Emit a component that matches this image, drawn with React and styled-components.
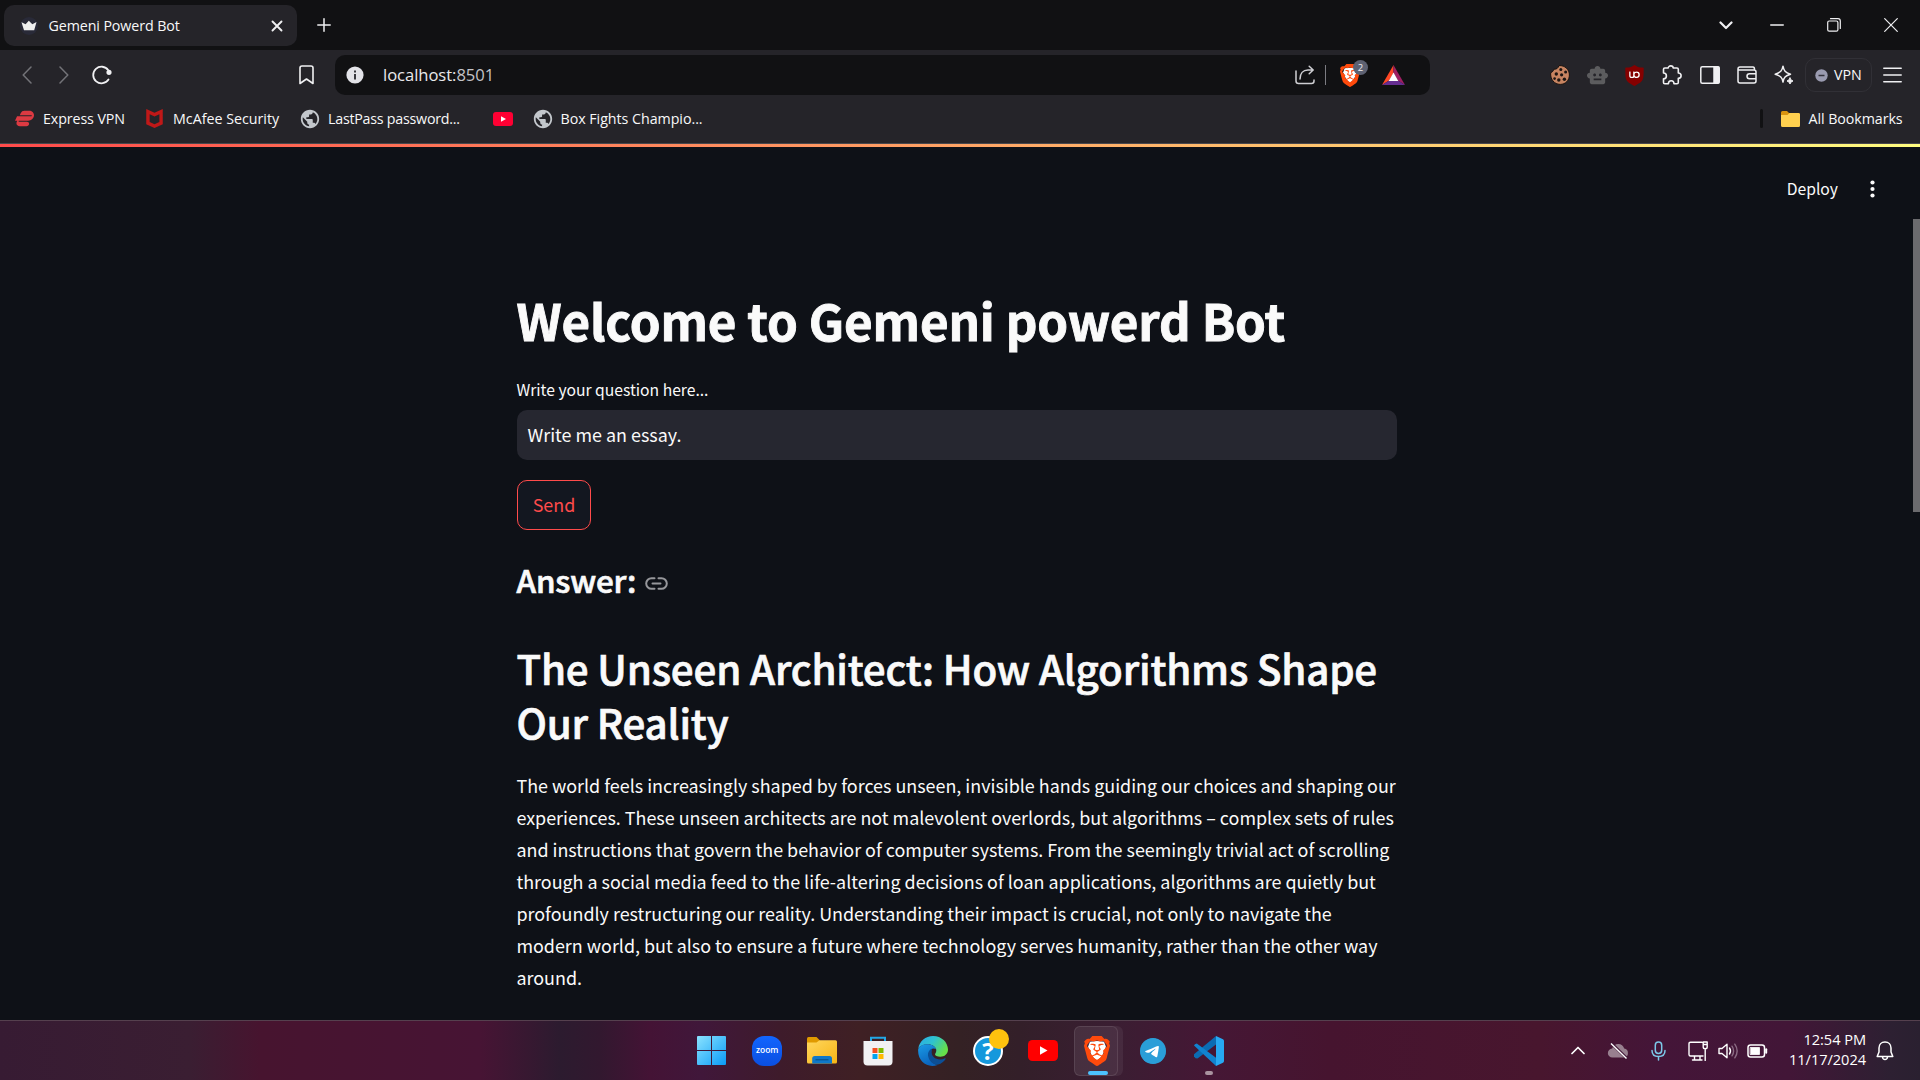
import React from "react";
import styled, { createGlobalStyle } from "styled-components";
import { SiBrave, SiExpressvpn, SiMcafee, SiUblockorigin } from "react-icons/si";
import { FaTelegram } from "react-icons/fa6";
import { MdSmartToy, MdPublic } from "react-icons/md";

const uiFont = '"Open Sans", "Noto Sans", sans-serif';
const pageFont = '"Noto Sans CJK SC", "Noto Sans", sans-serif';

const GlobalStyle = createGlobalStyle`
  *, *::before, *::after { box-sizing: border-box; }
  body { margin: 0; background: #0e1117; overflow: hidden; }
  h1, h2, h3, p { margin: 0; }
  button { padding: 0; border: 0; background: none; font: inherit; color: inherit; }
  svg { display: block; flex: none; }
`;

const Screen = styled.div`
  display: flex;
  flex-direction: column;
  width: 1920px;
  height: 1080px;
  overflow: hidden;
  color: #f8f8f9;
  font-family: ${uiFont};
  font-size: 14.25px;
  white-space: nowrap;
`;

/* ---------- browser chrome ---------- */

const TabStrip = styled.header`
  display: flex;
  align-items: center;
  height: 50px;
  flex: none;
  padding: 0 0 0 4px;
  background: #111113;
`;

const Tab = styled.div`
  display: flex;
  align-items: center;
  width: 293px;
  height: 41px;
  margin-top: 1px;
  padding: 0 14px 0 16px;
  border-radius: 10px;
  background: #252429;
`;

const Label = styled.span`
  letter-spacing: ${(p) => p.$tracking || 0}px;
  line-height: 20px;
`;

const TabTitle = styled(Label)`
  flex: 1;
  margin-left: 10.5px;
`;

const NewTab = styled.button`
  display: flex;
  margin-left: 19.5px;
`;

const WindowButtons = styled.div`
  display: flex;
  margin-left: auto;
  padding-right: 1px;
`;

const WindowButton = styled.button`
  display: flex;
  align-items: center;
  justify-content: center;
  width: ${(p) => p.$w || 57}px;
  height: 50px;
`;

const Toolbar = styled.div`
  display: flex;
  align-items: center;
  height: 50px;
  flex: none;
  padding-right: 18px;
  background: #252429;
`;

const NavButtons = styled.div`
  display: flex;
  align-items: center;
  width: 335px;
  padding-left: 8px;
`;

const NavButton = styled.button`
  display: flex;
  justify-content: center;
  width: 37.5px;
  margin-left: ${(p) => (p.$push ? "auto" : 0)};
  margin-right: ${(p) => (p.$push ? "10px" : 0)};
`;

const AddressBar = styled.div`
  display: flex;
  align-items: center;
  width: 1095px;
  height: 40px;
  padding: 0 25px 0 11px;
  border-radius: 10px;
  background: #111113;
`;

const Address = styled.span`
  flex: 1;
  margin-left: 19px;
  font-size: 16.6px;
  line-height: 22px;
  letter-spacing: -0.05px;
  color: #e9e9ec;
  i { font-style: normal; color: #c3c3c8; }
`;

const AddressDivider = styled.span`
  width: 1.5px;
  height: 20px;
  margin: 0 14px 0 10px;
  background: #7c7c82;
`;

const ShieldButton = styled.button`
  position: relative;
  display: flex;
  width: 20px;
  margin-right: 22px;
`;

const CountBadge = styled.span`
  position: absolute;
  left: 13px;
  top: -4px;
  width: 15px;
  height: 15px;
  border-radius: 50%;
  background: #5d6172;
  color: #f0f0f4;
  font-size: 9.5px;
  line-height: 15px;
  text-align: center;
`;

const Extensions = styled.div`
  display: flex;
  align-items: center;
  margin-left: auto;
`;

const ExtensionSlot = styled.button`
  display: flex;
  align-items: center;
  justify-content: center;
  width: 37.35px;
  height: 40px;
`;

const VpnButton = styled.button`
  display: flex;
  align-items: center;
  gap: 6px;
  width: 67px;
  height: 34px;
  margin: 0 11px 0 2px;
  padding-left: 9px;
  border: 1px solid #313036;
  border-radius: 10px;
  font-size: 14.25px;
`;

const BookmarksBar = styled.nav`
  display: flex;
  align-items: center;
  height: 44px;
  flex: none;
  padding: 0 17.5px 6px 15px;
  border-bottom: 1px solid #47474d;
  background: #252429;
`;

const Bookmark = styled.a`
  display: flex;
  align-items: center;
  gap: 9px;
  width: ${(p) => p.$w}px;
`;

const AllBookmarks = styled.a`
  display: flex;
  align-items: center;
  gap: 9px;
  margin-left: auto;
  &::before {
    content: "";
    width: 3px;
    height: 19px;
    margin-right: 9px;
    border-radius: 2px;
    background: #111113;
  }
`;

/* ---------- page ---------- */

const Decoration = styled.div`
  height: 3px;
  flex: none;
  background: linear-gradient(90deg, #ff4b4b, #fffd80);
`;

const Page = styled.main`
  display: flex;
  height: 873px;
  flex: none;
  flex-direction: column;
  overflow: hidden;
  background: #0e1117;
  color: #fafafa;
  font-family: ${pageFont};
`;

const PageToolbar = styled.div`
  display: flex;
  align-items: center;
  justify-content: flex-end;
  height: 72px;
  flex: none;
  padding: 12px 45px 0 0;
  gap: 32px;
  font-size: 15.7px;
  line-height: 24px;
`;

const Scroller = styled.div`
  display: flex;
  flex: 1;
  justify-content: space-between;
  padding-left: 517px;
`;

const Column = styled.section`
  display: flex;
  flex-direction: column;
  align-items: flex-start;
  width: 880px;
  padding-top: 67.5px;
`;

const Thumb = styled.div`
  width: 7px;
  height: 293px;
  background: #6b6b6e;
`;

const Title = styled.h1`
  margin-left: -0.5px;
  font-size: 49.3px;
  font-weight: 700;
  line-height: 66px;
  letter-spacing: -0.14px;
  -webkit-text-stroke: 0.9px #fafafa;
`;

const FieldLabel = styled.label`
  margin: 23.5px 0 0 -0.5px;
  font-size: 15.7px;
  line-height: 28px;
  letter-spacing: -0.02px;
`;

const Field = styled.div`
  width: 880px;
  height: 50px;
  margin-top: 6px;
  padding-left: 10.5px;
  border-radius: 10px;
  background: #262730;
  font-size: 17.92px;
  line-height: 48px;
`;

const SendButton = styled.button`
  width: 74px;
  height: 50px;
  margin-top: 20px;
  padding-bottom: 2px;
  border: 1px solid #ff4b4b;
  border-radius: 10px;
  background: #131720;
  color: #ff4b4b;
  font-size: 17.92px;
  line-height: 46px;
`;

const AnswerRow = styled.div`
  display: flex;
  align-items: center;
  gap: 9px;
  margin: 28.5px 0 0 -0.5px;
  svg { margin-top: 8px; }
`;

const AnswerHeading = styled.h3`
  font-size: 31.4px;
  font-weight: 500;
  line-height: 42px;
  letter-spacing: -0.15px;
  -webkit-text-stroke: 0.7px #fafafa;
`;

const EssayHeading = styled.h2`
  margin: 40px 0 0 -0.5px;
  font-size: 40.3px;
  font-weight: 500;
  line-height: 54px;
  letter-spacing: -0.17px;
  -webkit-text-stroke: 0.7px #fafafa;
`;

const Paragraph = styled.p`
  margin: 20.5px 0 0 -0.6px;
  font-size: 17.92px;
  line-height: 32px;
`;

/* ---------- taskbar ---------- */

const Taskbar = styled.footer`
  display: flex;
  align-items: center;
  height: 60px;
  flex: none;
  border-top: 1px solid #55404e;
  background: linear-gradient(
    90deg,
    #371b33 0, #3a1e32 190px, #47142f 260px, #471434 480px, #2c1b2f 560px,
    #32182f 600px, #441335 650px, #40173a 700px, #3e1b2b 780px, #3f2024 860px,
    #342124 960px, #331f29 1020px, #3a1e32 1110px, #451735 1210px, #46142f 1330px,
    #48162e 1540px, #441538 1660px, #421637 1790px, #2d2032 1890px, #2a2030 1920px
  );
  color: #fff;
`;

const Apps = styled.div`
  display: flex;
  height: 59px;
  margin-left: 684.4px;
`;

const AppButton = styled.button`
  position: relative;
  display: flex;
  align-items: center;
  justify-content: center;
  width: 55.2px;
  height: 59px;
`;

const ActiveTile = styled.div`
  display: flex;
  align-items: center;
  justify-content: center;
  width: 44px;
  height: 50px;
  flex: none;
  margin-right: 5px;
  padding-left: 3px;
  border: 1px solid rgba(255, 255, 255, 0.1);
  border-radius: 6px;
  background: rgba(255, 255, 255, 0.08);
  box-shadow: 5px 0 0 0 rgba(255, 255, 255, 0.06);
`;

const Indicator = styled.span`
  position: absolute;
  left: 50%;
  bottom: 5px;
  width: ${(p) => p.$w}px;
  height: 4px;
  border-radius: 2px;
  transform: translateX(-50%);
  background: ${(p) => p.$color};
`;

const ZoomBadge = styled.span`
  width: 30px;
  height: 30px;
  border-radius: 12px;
  background: linear-gradient(180deg, #1165ff, #0b4fe0);
  color: #fff;
  font: 600 8.5px/27px ${uiFont};
  letter-spacing: -0.1px;
  text-align: center;
`;

const HelpBadge = styled.span`
  width: 30px;
  height: 30px;
  border: 2px solid #fff;
  border-radius: 50%;
  background: #1598dc;
  color: #fff;
  font: 700 24px/26px ${uiFont};
  text-align: center;
`;

const Notice = styled.span`
  position: absolute;
  left: 28.6px;
  top: 8px;
  width: 20px;
  height: 20px;
  border-radius: 50%;
  background: #ffc20e;
`;

const TelegramDisc = styled.span`
  display: flex;
  border-radius: 50%;
  background: radial-gradient(circle, #fff 60%, #2a9ed8 62%);
`;

const Tray = styled.div`
  display: flex;
  align-items: center;
  margin-left: auto;
  padding-right: 26px;
`;

const TrayIcon = styled.span`
  display: flex;
  justify-content: center;
  width: ${(p) => p.$w}px;
`;

const Clock = styled.time`
  display: flex;
  flex-direction: column;
  align-items: flex-end;
  width: 89px;
  margin-right: 10px;
  padding-bottom: 3px;
  font-size: 14.6px;
  line-height: 20px;
  letter-spacing: -0.05px;
`;

/* ---------- drawings ---------- */

const Line = ({ w, h, d, color = "#f0f0f2", sw = 1.5, children }) => (
  <svg width={w} height={h} viewBox={`0 0 ${w} ${h}`} fill="none" stroke={color} strokeWidth={sw} strokeLinecap="round" strokeLinejoin="round">
    {d && <path d={d} />}
    {children}
  </svg>
);

const Crown = () => (
  <svg width="18" height="18" viewBox="0 0 18 18">
    <circle cx="9" cy="9" r="9" fill="#292a38" />
    <path d="M1.5 5.2 5.6 7.2 8.8 3.8 12.3 7.2 16.5 5 14.2 13.2H4Z" fill="#f0f0f0" />
  </svg>
);

const BraveLion = ({ w, h }) => (
  <svg width={w} height={h} viewBox="1.800 0 20.400 24" preserveAspectRatio="none">
    <path d="M6.500 4.500 12 4 17.500 4.500 19 8.500 16 16 12 20 8 16 5 8.500Z" fill="#fff" />
    <SiBrave size={24} color="#ff4a0c" />
  </svg>
);

const BatTriangle = () => (
  <svg width="23" height="20" viewBox="0 0 23 20">
    <path d="M11.5 0 0 20 7 15.5 11.5 8Z" fill="#ff4724" />
    <path d="M11.5 0 23 20 16 15.5 11.5 8Z" fill="#9e1f63" />
    <path d="M0 20 7 15.5H16L23 20Z" fill="#662d91" />
    <path d="M11.5 7.5 16.3 16H6.7Z" fill="#fff" />
  </svg>
);

const Cookie = () => (
  <svg width="20" height="20" viewBox="0 0 20 20">
    <path d="M9 .6C8 3.2 6.8 4.4 3.8 4.2 3.5 6 2.4 7 .7 7.7 0 14 4.2 19.4 10.2 19.4c5.400 0 9.200-4.200 9.200-9.400C19.400 4.600 15 .2 9 .6Z" fill="#c78461" stroke="#17120f" />
    <g fill="#1c1512">
      <circle cx="10.800" cy="4.400" r="1.500" /><circle cx="15.600" cy="7" r="1.500" />
      <circle cx="6.300" cy="9" r="1.700" /><circle cx="11.600" cy="9.800" r="1.600" />
      <circle cx="4.600" cy="13.600" r="1.300" /><circle cx="8.800" cy="15" r="1.700" />
      <circle cx="14.400" cy="14.200" r="1.700" />
    </g>
  </svg>
);

const Ublock = () => (
  <svg width="21" height="21" viewBox="0 0 24 24">
    <path d="M5 7H19V15H5Z" fill="#fff" />
    <SiUblockorigin size={24} color="#850000" />
  </svg>
);

const YouTube = ({ w, h }) => (
  <svg width={w} height={h} viewBox="0 0 30 21" preserveAspectRatio="none">
    <rect width="30" height="21" rx="4.500" fill={w > 25 ? "#ff0000" : "#ff0033"} />
    <path d="M12 6.200 19.500 10.500 12 14.800Z" fill="#fff" />
  </svg>
);

const SmallFolder = () => (
  <svg width="19" height="16" viewBox="0 0 19 16">
    <path d="M0 1.500Q0 0 1.500 0H6L8 2H17.500Q19 2 19 3.500V8H0Z" fill="#d9940f" />
    <path d="M0 4H6.500L8.500 2H17.500Q19 2 19 3.500V14.500Q19 16 17.500 16H1.500Q0 16 0 14.500Z" fill="#ffd04f" />
  </svg>
);

const WindowsLogo = () => (
  <svg width="29" height="29" viewBox="0 0 29 29">
    <defs>
      <linearGradient id="win" x1="0" y1="0" x2="1" y2="1">
        <stop offset="0" stopColor="#8be3ff" /><stop offset="1" stopColor="#0a9bf7" />
      </linearGradient>
    </defs>
    <path d="M1 0H14V14H0V1Q0 0 1 0ZM15 0H28Q29 0 29 1V14H15ZM0 15H14V29H1Q0 29 0 28ZM15 15H29V28Q29 29 28 29H15Z" fill="url(#win)" />
  </svg>
);

const Explorer = () => (
  <svg width="30" height="27" viewBox="0 0 30 27">
    <defs>
      <linearGradient id="fold" x1="0" y1="0" x2="1" y2="1">
        <stop offset="0" stopColor="#ffd75e" /><stop offset="1" stopColor="#f7b515" />
      </linearGradient>
    </defs>
    <path d="M0 1.500Q0 0 1.500 0H9.500L13 3.500V9H0Z" fill="#e09a00" />
    <path d="M0 5.500H9.500L12.500 3.200H28.500Q30 3.200 30 4.700V25Q30 26.500 28.500 26.500H1.500Q0 26.500 0 25Z" fill="url(#fold)" />
    <path d="M5.200 26.500V21.500Q5.200 19 7.700 19H22.500Q25 19 25 21.500V26.500Z" fill="#0f78c8" />
    <path d="M8.500 22.800H21.500" stroke="#064b82" strokeWidth="1" />
  </svg>
);

const Store = () => (
  <svg width="30" height="30" viewBox="0 0 30 30">
    <path d="M8 7V1.800H22V7" fill="none" stroke="#22a7e6" strokeWidth="2" />
    <path d="M.5 5H29.500V25.500Q29.500 29.500 25.500 29.500H4.500Q.5 29.500 .5 25.500Z" fill="#f1f1f3" />
    <path d="M9.500 12H14.500V17H9.500Z" fill="#f25022" /><path d="M15.500 12H20.500V17H15.500Z" fill="#7fba00" />
    <path d="M9.500 18H14.500V23H9.500Z" fill="#00a4ef" /><path d="M15.500 18H20.500V23H15.500Z" fill="#ffb900" />
  </svg>
);

const Edge = () => (
  <svg width="30" height="30" viewBox="0 0 30 30">
    <defs>
      <linearGradient id="edgeTop" x1="0" y1="0" x2="1" y2=".5">
        <stop offset="0" stopColor="#2aa9e8" /><stop offset=".5" stopColor="#2fc3cf" /><stop offset="1" stopColor="#66e04a" />
      </linearGradient>
      <linearGradient id="edgeLeft" x1="0" y1="0" x2=".4" y2="1">
        <stop offset="0" stopColor="#1a9be6" /><stop offset="1" stopColor="#0b64bd" />
      </linearGradient>
    </defs>
    <path d="M.3 12.500C1.500 5 7.500 0 15 0c8.600 0 15 6.400 15 13.500 0 4.600-3.600 7.200-7.600 7.200-3.300 0-5.400-1.200-5.400-2.400 0-.8 1.300-1.400 1.300-4C18.300 11 14 8.300 9.600 8.300 5.400 8.300 1.800 10.300.3 12.500Z" fill="url(#edgeTop)" />
    <path d="M.2 13C1.500 10.200 5 8.200 9.300 8.200c4.600 0 8 2.300 8.800 5-2.500-1.600-6.600-.4-7.200 4.300-.6 5.500 4 10.500 8.600 11.500C9.500 32.600-.9 25.500.2 13Z" fill="url(#edgeLeft)" />
    <path d="M14 12.800c-3 1-4.600 4.200-3.800 7.800 1.300 5.500 5.800 8.600 10 8 3.200-1 6-3.300 7.400-5.700.3-.6-.2-.9-.7-.6-5.500 3-14.800.2-13-8.300Z" fill="#0c4f96" />
  </svg>
);

const VsCode = () => (
  <svg width="30" height="30" viewBox="0 0 30 30">
    <path d="M0 18.200 22 0V8.500L3.500 22.500 1.500 22.200 0 20.500Z" fill="#0b6cb3" />
    <path d="M0 9.500Q.5 7.800 2.800 7.500L22 21.800V30Z" fill="#1183cf" />
    <path d="M22 0 29 3.200Q30 3.800 30 5V25Q30 26.200 29 26.800L22 30Z" fill="#27a9f2" />
  </svg>
);

const CloudOff = () => (
  <svg width="22" height="18" viewBox="0 0 22 18">
    <path d="M5.500 15.500a4.500 4.500 0 0 1-.3-9C6.200 3.500 8.500 2 11.200 2c3 0 5.300 1.800 6 4.600A4.500 4.500 0 0 1 17 15.500Z" fill="#98808f" />
    <path d="M4 1 20 16.500" stroke="#421637" strokeWidth="3" />
    <path d="M4 1.500 19.500 16.500" stroke="#fff" strokeWidth="1.400" />
  </svg>
);

const essay = [
  "The world feels increasingly shaped by forces unseen, invisible hands guiding our choices and shaping our",
  "experiences. These unseen architects are not malevolent overlords, but algorithms – complex sets of rules",
  "and instructions that govern the behavior of computer systems. From the seemingly trivial act of scrolling",
  "through a social media feed to the life-altering decisions of loan applications, algorithms are quietly but",
  "profoundly restructuring our reality. Understanding their impact is crucial, not only to navigate the",
  "modern world, but also to ensure a future where technology serves humanity, rather than the other way",
  "around.",
];

const GlobeBox = styled.span`
  display: flex;
  margin: 0 -2px;
`;

const Globe = () => (
  <GlobeBox><MdPublic size={22} color="#c3c7cc" /></GlobeBox>
);

export default function App() {
  return (
    <Screen>
      <GlobalStyle />
      <TabStrip>
        <Tab>
          <Crown />
          <TabTitle $tracking={-0.1}>Gemeni Powerd Bot</TabTitle>
          <Line w={12} h={12} sw={1.9} d="M1.500 1.500 10.500 10.500M10.500 1.500 1.500 10.500" />
        </Tab>
        <NewTab><Line w={14} h={14} d="M7 .8V13.200M.8 7H13.200" /></NewTab>
        <WindowButtons>
          <WindowButton $w={45}><Line w={14} h={9} sw={2.200} d="M1.500 1.500 7 7 12.500 1.500" /></WindowButton>
          <WindowButton><Line w={14} h={2} sw={1.300} d="M.7 1H13.300" /></WindowButton>
          <WindowButton>
            <Line w={14} h={14} sw={1.200}><rect x=".7" y="3" width="10.200" height="10.200" rx="1.500" /><path d="M3.500 .7H11Q13.300 .7 13.300 3V10.500" /></Line>
          </WindowButton>
          <WindowButton><Line w={14} h={14} sw={1.200} d="M.7 .7 13.300 13.300M13.300 .7 .7 13.300" /></WindowButton>
        </WindowButtons>
      </TabStrip>

      <Toolbar>
        <NavButtons>
          <NavButton><Line w={10} h={18} color="#737378" d="M9 1 1.200 9 9 17" /></NavButton>
          <NavButton><Line w={10} h={18} color="#737378" d="M1 1 8.800 9 1 17" /></NavButton>
          <NavButton>
            <Line w={20} h={20} sw={1.800} d="M16.500 14.500A8.300 8.300 0 1 1 16.300 5.200"><circle cx="17" cy="7.300" r="1.700" fill="#f0f0f2" /></Line>
          </NavButton>
          <NavButton $push><Line w={15} h={20} sw={1.600} d="M3 1H12Q14 1 14 3V18.500L7.500 14 1 18.500V3Q1 1 3 1Z" /></NavButton>
        </NavButtons>
        <AddressBar>
          <svg width="18" height="18" viewBox="0 0 18 18">
            <circle cx="9" cy="9" r="8.600" fill="#e3e3e8" />
            <path d="M8 8H10V13.500H8ZM8 4.500H10V6.500H8Z" fill="#38383d" />
          </svg>
          <Address>localhost:<i>8501</i></Address>
          <Line w={20} h={20} color="#cfcfd3" d="M1 6V16Q1 18.500 3.500 18.500H16.500Q19 18.500 19 16V15M5 14C5 8.500 8 5 13 5H18M14.200 1.200 18.200 5 14.200 8.800" />
          <AddressDivider />
          <ShieldButton>
            <BraveLion w={20} h={23} />
            <CountBadge>2</CountBadge>
          </ShieldButton>
          <BatTriangle />
        </AddressBar>
        <Extensions>
          <ExtensionSlot><Cookie /></ExtensionSlot>
          <ExtensionSlot><MdSmartToy size={23} color="#5c5c5e" /></ExtensionSlot>
          <ExtensionSlot><Ublock /></ExtensionSlot>
          <ExtensionSlot>
            <Line w={20} h={20} sw={1.600} d="M2.800 3H6.200C6.200 1.800 7.400 .9 8.700 .9S11.200 1.800 11.200 3H15Q16.300 3 16.300 4.300V8C17.800 8 19.100 9.200 19.100 10.700S17.800 13.300 16.300 13.300V17.500Q16.300 18.800 15 18.800H12C12 17.200 11 15.800 9.200 15.800S6.400 17.200 6.400 18.800H2.800Q1.500 18.800 1.500 17.500V13.800C3.300 13.800 4.400 12.400 4.400 10.900S3.300 8 1.500 8V4.300Q1.500 3 2.800 3Z" />
          </ExtensionSlot>
          <ExtensionSlot>
            <Line w={20} h={18}><rect x=".8" y=".8" width="18.400" height="16.400" rx="1.500" /><path d="M14 1H18Q19 1 19 2V16Q19 17 18 17H14Z" fill="#f0f0f2" /></Line>
          </ExtensionSlot>
          <ExtensionSlot>
            <Line w={20} h={18} d="M1 3Q1 1 3 1H16Q17.500 1 17.500 3.500M1 3Q1 4 2.500 4H17Q19 4 19 6V15Q19 17 17 17H3Q1 17 1 15ZM19 7.800H12.500Q10 7.800 10 10.200T12.500 12.800H19" />
          </ExtensionSlot>
          <ExtensionSlot>
            <Line w={20} h={20} d="M9 1.200C9.800 5.800 11.200 7.500 16.500 9.200 11.200 10.800 9.800 12.500 9 17 8.200 12.500 6.500 10.800 1.200 9.200 6.500 7.500 8.200 5.800 9 1.200Z">
              <path d="M16 13Q16.500 15.500 19 16 16.500 16.500 16 19 15.500 16.500 13 16 15.500 15.500 16 13Z" fill="#f0f0f2" strokeWidth="1" />
            </Line>
          </ExtensionSlot>
          <VpnButton>
            <svg width="13" height="13" viewBox="0 0 13 13"><circle cx="6.500" cy="6.500" r="6.200" fill="#9a9bb0" /><path d="M3.500 6.500H9.500" stroke="#33333c" strokeWidth="1.500" /></svg>
            <Label>VPN</Label>
          </VpnButton>
          <Line w={19} h={16} d="M.8 1.300H18.200M.8 8H18.200M.8 14.700H18.200" />
        </Extensions>
      </Toolbar>

      <BookmarksBar>
        <Bookmark $w={130}><SiExpressvpn size={19} color="#dd3a42" /><Label $tracking={-0.1}>Express VPN</Label></Bookmark>
        <Bookmark $w={156}><SiMcafee size={19} color="#c01818" /><Label>McAfee Security</Label></Bookmark>
        <Bookmark $w={192}><Globe /><Label $tracking={-0.24}>LastPass password...</Label></Bookmark>
        <Bookmark $w={40.5}><YouTube w={20} h={14} /></Bookmark>
        <Bookmark $w={180}><Globe /><Label $tracking={-0.04}>Box Fights Champio...</Label></Bookmark>
        <AllBookmarks><SmallFolder /><Label $tracking={-0.08}>All Bookmarks</Label></AllBookmarks>
      </BookmarksBar>

      <Decoration />
      <Page>
        <PageToolbar>
          <span>Deploy</span>
          <svg width="5" height="18" viewBox="0 0 5 18" fill="#fafafa"><circle cx="2.500" cy="2.500" r="2.100" /><circle cx="2.500" cy="9" r="2.100" /><circle cx="2.500" cy="15.500" r="2.100" /></svg>
        </PageToolbar>
        <Scroller>
          <Column>
            <Title>Welcome to Gemeni powerd Bot</Title>
            <FieldLabel>Write your question here...</FieldLabel>
            <Field>Write me an essay.</Field>
            <SendButton>Send</SendButton>
            <AnswerRow>
              <AnswerHeading>Answer:</AnswerHeading>
              <Line w={23} h={13} sw={2} color="#96979b" d="M9.500 1.200H6.500A5.200 5.200 0 0 0 6.500 11.800H9.500M13.500 1.200H16.500A5.200 5.200 0 0 1 16.500 11.800H13.500M7.500 6.500H15.500" />
            </AnswerRow>
            <EssayHeading>The Unseen Architect: How Algorithms Shape<br />Our Reality</EssayHeading>
            <Paragraph>
              {essay.map((line) => <React.Fragment key={line}>{line}<br /></React.Fragment>)}
            </Paragraph>
          </Column>
          <Thumb />
        </Scroller>
      </Page>

      <Taskbar>
        <Apps>
          <AppButton><WindowsLogo /></AppButton>
          <AppButton><ZoomBadge>zoom</ZoomBadge></AppButton>
          <AppButton><Explorer /></AppButton>
          <AppButton><Store /></AppButton>
          <AppButton><Edge /></AppButton>
          <AppButton><HelpBadge>?</HelpBadge><Notice /></AppButton>
          <AppButton><YouTube w={30} h={21} /></AppButton>
          <AppButton>
            <ActiveTile><BraveLion w={26} h={30} /></ActiveTile>
            <Indicator $w={20} $color="#4cc2ff" />
          </AppButton>
          <AppButton><TelegramDisc><FaTelegram size={26} color="#2a9ed8" /></TelegramDisc></AppButton>
          <AppButton><VsCode /><Indicator $w={8} $color="#a9939f" /></AppButton>
        </Apps>
        <Tray>
          <TrayIcon $w={40}><Line w={14} h={9} sw={1.700} color="#fff" d="M1 7.500 7 1.500 13 7.500" /></TrayIcon>
          <TrayIcon $w={40}><CloudOff /></TrayIcon>
          <TrayIcon $w={40}>
            <Line w={15} h={20} color="#7cc8e8"><rect x="4.300" y="1" width="6.400" height="11.500" rx="3.200" /><path d="M1 9.500Q1 15.500 7.500 15.500T14 9.500M7.500 15.500V19" /></Line>
          </TrayIcon>
          <TrayIcon $w={40}>
            <Line w={21} h={20} sw={1.400} color="#fff" d="M14 1.200H2.500Q1 1.200 1 2.700V13.500Q1 15 2.500 15H15M6.500 15V19M12 15V19M4.500 19H14M15.200 1H19.200V6Q19.200 7.800 17.200 7.800T15.200 6ZM17.200 8V19.500M15.500 3.500H19" />
          </TrayIcon>
          <TrayIcon $w={20}>
            <Line w={21} h={16} sw={1.400} color="#fff" d="M1 5.500H4L9 1.200V14.800L4 10.500H1ZM11.500 5Q13.500 8 11.500 11">
              <path d="M14 3.200Q17.200 8 14 12.800M16.800 1.200Q21.500 8 16.800 14.800" stroke="#8a6a82" />
            </Line>
          </TrayIcon>
          <TrayIcon $w={39}>
            <Line w={21} h={14} sw={1.500} color="#fff"><rect x="1" y="1" width="16.500" height="12" rx="2.500" /><path d="M3.500 3.500H12.500V10.500H3.500Z" fill="#fff" strokeWidth=".8" /><path d="M19.200 5.200V8.800" strokeWidth="2" /></Line>
          </TrayIcon>
          <Clock><span>12:54 PM</span><span>11/17/2024</span></Clock>
          <Line w={18} h={20} sw={1.500} color="#fff" d="M9 1C5.300 1 3 3.700 3 7V11L1.200 15.500H16.800L15 11V7C15 3.700 12.700 1 9 1ZM6.500 16Q6.800 18.500 9 18.500T11.500 16" />
        </Tray>
      </Taskbar>
    </Screen>
  );
}
